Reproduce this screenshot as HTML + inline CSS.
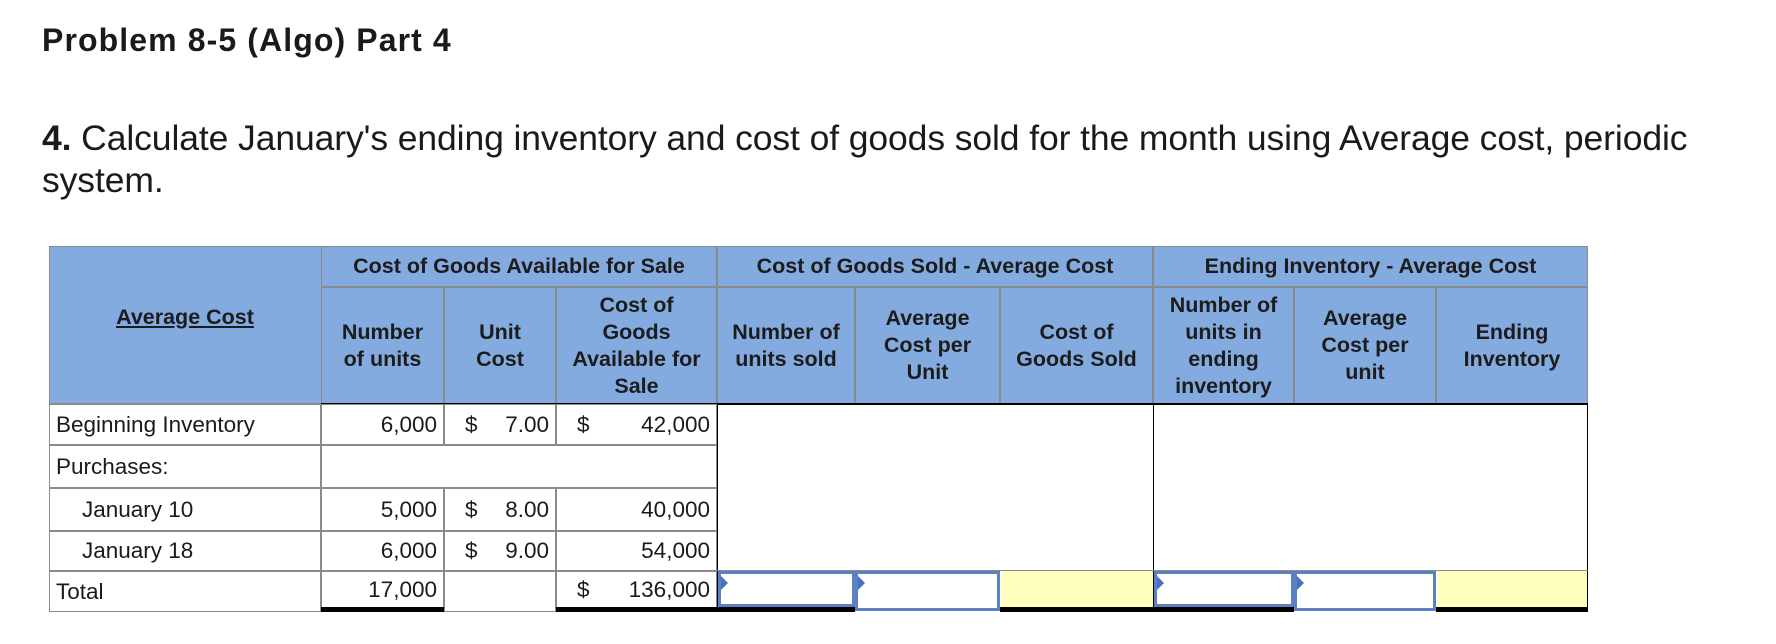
<!DOCTYPE html>
<html><head><meta charset="utf-8"><style>
body{margin:0;width:1776px;height:644px;background:#fff;position:relative;overflow:hidden;font-family:"Liberation Sans",sans-serif;color:#1a1a1a}
.a{position:absolute;box-sizing:border-box}
.h{background:#84abdf}
.t{font-family:"Liberation Sans Narrow","Liberation Sans",sans-serif;font-weight:bold;font-size:21.5px;line-height:27px;text-align:center;display:flex;align-items:center;justify-content:center;color:#1c1c1c}
.d{font-family:"Liberation Sans Narrow","Liberation Sans",sans-serif;font-size:22.5px;display:flex;align-items:center;padding:0 6px}
.r{justify-content:flex-end}
.g{border:1px solid #8a8a8a}
.in{border:3px solid #5b80c4;background:#fff}
.y{background:#ffffc0}
.dbl{height:5px;border-top:3px solid #000;border-bottom:2px solid #000}
.tri{position:absolute;left:0;top:2px;width:0;height:0;border-top:7px solid transparent;border-bottom:7px solid transparent;border-left:7px solid #4a72b8}
.sb{justify-content:space-between}
</style></head><body>
<div class="a" style="left:42px;top:22px;font-weight:bold;font-size:32px;letter-spacing:1.1px">Problem 8-5 (Algo) Part 4</div>
<div class="a" style="left:42px;top:117px;font-size:35.5px;line-height:42px;width:1700px;letter-spacing:-0.1px"><b>4.</b> Calculate January's ending inventory and cost of goods sold for the month using Average cost, periodic<br>system.</div>

<div class="a h" style="left:49px;top:246px;width:1539px;height:158px;border:1px solid #8a8a8a"></div>
<div class="a t" style="left:49px;top:246px;width:272px;height:156px;text-decoration:underline;padding-bottom:14px">Average Cost</div>
<div class="a t g" style="left:321px;top:246px;width:396px;height:41px">Cost of Goods Available for Sale</div>
<div class="a t g" style="left:717px;top:246px;width:436px;height:41px">Cost of Goods Sold - Average Cost</div>
<div class="a t g" style="left:1153px;top:246px;width:435px;height:41px">Ending Inventory - Average Cost</div>
<div class="a t g" style="left:321px;top:287px;width:123px;height:117px">Number<br>of units</div>
<div class="a t g" style="left:444px;top:287px;width:112px;height:117px">Unit<br>Cost</div>
<div class="a t g" style="left:556px;top:287px;width:161px;height:117px">Cost of<br>Goods<br>Available for<br>Sale</div>
<div class="a t g" style="left:717px;top:287px;width:138px;height:117px">Number of<br>units sold</div>
<div class="a t g" style="left:855px;top:287px;width:145px;height:117px">Average<br>Cost per<br>Unit</div>
<div class="a t g" style="left:1000px;top:287px;width:153px;height:117px">Cost of<br>Goods Sold</div>
<div class="a t g" style="left:1153px;top:287px;width:141px;height:117px">Number of<br>units in<br>ending<br>inventory</div>
<div class="a t g" style="left:1294px;top:287px;width:142px;height:117px">Average<br>Cost per<br>unit</div>
<div class="a t g" style="left:1436px;top:287px;width:152px;height:117px">Ending<br>Inventory</div>
<div class="a" style="left:321px;top:403px;width:1267px;height:2px;background:#000"></div>

<div class="a d g" style="left:49px;top:404px;width:272px;height:41px">Beginning Inventory</div>
<div class="a d g" style="left:49px;top:445px;width:272px;height:43px">Purchases:</div>
<div class="a d g" style="left:49px;top:488px;width:272px;height:43px;padding-left:32px">January 10</div>
<div class="a d g" style="left:49px;top:531px;width:272px;height:40px;padding-left:32px">January 18</div>
<div class="a d g" style="left:49px;top:571px;width:272px;height:41px">Total</div>

<div class="a d g r" style="left:321px;top:404px;width:123px;height:41px">6,000</div>
<div class="a d g sb" style="left:444px;top:404px;width:112px;height:41px;padding-left:20px"><span>$</span><span>7.00</span></div>
<div class="a d g sb" style="left:556px;top:404px;width:161px;height:41px;padding-left:20px"><span>$</span><span>42,000</span></div>
<div class="a g" style="left:321px;top:445px;width:396px;height:43px"></div>
<div class="a d g r" style="left:321px;top:488px;width:123px;height:43px">5,000</div>
<div class="a d g sb" style="left:444px;top:488px;width:112px;height:43px;padding-left:20px"><span>$</span><span>8.00</span></div>
<div class="a d g r" style="left:556px;top:488px;width:161px;height:43px">40,000</div>
<div class="a d g r" style="left:321px;top:531px;width:123px;height:40px">6,000</div>
<div class="a d g sb" style="left:444px;top:531px;width:112px;height:40px;padding-left:20px"><span>$</span><span>9.00</span></div>
<div class="a d g r" style="left:556px;top:531px;width:161px;height:40px">54,000</div>
<div class="a d g r" style="left:321px;top:571px;width:123px;height:36px;border-bottom:none">17,000</div>
<div class="a g" style="left:444px;top:571px;width:112px;height:41px"></div>
<div class="a d g sb" style="left:556px;top:571px;width:161px;height:36px;border-bottom:none;padding-left:20px"><span>$</span><span>136,000</span></div>
<div class="a dbl" style="left:321px;top:607px;width:123px"></div>
<div class="a dbl" style="left:556px;top:607px;width:161px"></div>

<div class="a" style="left:717px;top:404px;width:1px;height:208px;background:#000"></div>
<div class="a" style="left:1153px;top:404px;width:1px;height:208px;background:#000"></div>
<div class="a" style="left:1587px;top:404px;width:1px;height:208px;background:#000"></div>
<div class="a" style="left:717px;top:570px;width:871px;height:1px;background:#8a8a8a"></div>

<div class="a in" style="left:718px;top:571px;width:137px;height:36px"><div class="tri"></div></div>
<div class="a in" style="left:855px;top:571px;width:145px;height:40px"><div class="tri"></div></div>
<div class="a y" style="left:1001px;top:571px;width:152px;height:36px"></div>
<div class="a in" style="left:1154px;top:571px;width:140px;height:36px"><div class="tri"></div></div>
<div class="a in" style="left:1294px;top:571px;width:142px;height:40px"><div class="tri"></div></div>
<div class="a y" style="left:1437px;top:571px;width:150px;height:36px"></div>
<div class="a dbl" style="left:1000px;top:607px;width:153px"></div>
<div class="a dbl" style="left:1153px;top:607px;width:141px"></div>
<div class="a dbl" style="left:1436px;top:607px;width:152px"></div>
<div class="a dbl" style="left:717px;top:607px;width:138px"></div>
</body></html>
